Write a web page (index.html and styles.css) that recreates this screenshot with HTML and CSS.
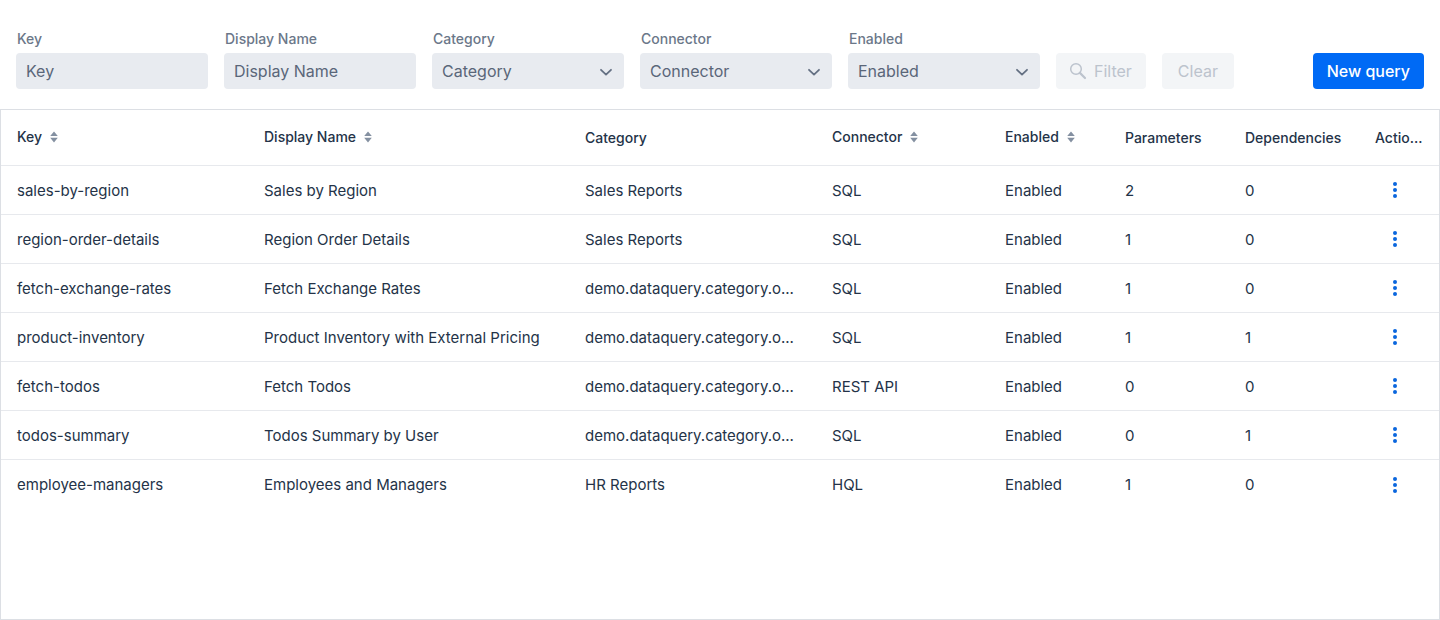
FILE: index.html
```html
<!DOCTYPE html>
<html lang="en">
<head>
    <meta charset="UTF-8">
    <meta name="viewport" content="width=device-width, initial-scale=1.0">
    <title>Data Queries</title>
    <link rel="stylesheet" href="styles.css">
</head>
<body>
    <!-- Shared icons -->
    <svg class="sprite" aria-hidden="true">
        <symbol id="chevron" viewBox="0 0 14 14">
            <path d="M2 4.8 L7 9.6 L12 4.8" fill="none" stroke="currentColor" stroke-width="1.8" stroke-linecap="round" stroke-linejoin="round"/>
        </symbol>
        <symbol id="sort" viewBox="0 0 8 12">
            <path d="M4 0.4 L7.8 5 H0.2 Z M4 11.4 L7.8 6.8 H0.2 Z" fill="currentColor"/>
        </symbol>
        <symbol id="dots" viewBox="0 0 16 16">
            <circle cx="8" cy="2" r="2" fill="currentColor"/>
            <circle cx="8" cy="8" r="2" fill="currentColor"/>
            <circle cx="8" cy="14" r="2" fill="currentColor"/>
        </symbol>
    </svg>

    <form class="filter-bar">
        <div class="field">
            <label for="filterKey">Key</label>
            <input type="text" id="filterKey" placeholder="Key">
        </div>
        <div class="field">
            <label for="filterName">Display Name</label>
            <input type="text" id="filterName" placeholder="Display Name">
        </div>
        <div class="field">
            <label for="filterCategory">Category</label>
            <div class="select-wrap">
                <select id="filterCategory"><option>Category</option></select>
                <svg class="chevron"><use href="#chevron"/></svg>
            </div>
        </div>
        <div class="field">
            <label for="filterConnector">Connector</label>
            <div class="select-wrap">
                <select id="filterConnector"><option>Connector</option></select>
                <svg class="chevron"><use href="#chevron"/></svg>
            </div>
        </div>
        <div class="field">
            <label for="filterEnabled">Enabled</label>
            <div class="select-wrap">
                <select id="filterEnabled"><option>Enabled</option></select>
                <svg class="chevron"><use href="#chevron"/></svg>
            </div>
        </div>
        <button type="button" class="btn btn-filter" disabled>
            <svg class="search-icon" viewBox="0 0 18 18" aria-hidden="true">
                <circle cx="7" cy="7" r="5.3" fill="none" stroke="currentColor" stroke-width="1.5"/>
                <path d="M10.9 10.9 L16 16" stroke="currentColor" stroke-width="2.2" stroke-linecap="round"/>
            </svg>
            Filter
        </button>
        <button type="button" class="btn" disabled>Clear</button>
        <button type="button" class="btn btn-primary">New query</button>
    </form>

    <main class="grid">
        <table>
            <colgroup>
                <col class="col-key">
                <col>
                <col class="col-category">
                <col class="col-connector">
                <col class="col-enabled">
                <col class="col-parameters">
                <col class="col-dependencies">
                <col class="col-actions">
            </colgroup>
            <thead>
                <tr>
                    <th><button class="sorter">Key <svg><use href="#sort"/></svg></button></th>
                    <th><button class="sorter">Display Name <svg><use href="#sort"/></svg></button></th>
                    <th>Category</th>
                    <th><button class="sorter">Connector <svg><use href="#sort"/></svg></button></th>
                    <th><button class="sorter">Enabled <svg><use href="#sort"/></svg></button></th>
                    <th>Parameters</th>
                    <th>Dependencies</th>
                    <th>Actions</th>
                </tr>
            </thead>
            <tbody>
                <tr>
                    <td>sales-by-region</td>
                    <td>Sales by Region</td>
                    <td>Sales Reports</td>
                    <td>SQL</td>
                    <td>Enabled</td>
                    <td>2</td>
                    <td>0</td>
                    <td><button class="menu-btn" aria-label="Actions"><svg><use href="#dots"/></svg></button></td>
                </tr>
                <tr>
                    <td>region-order-details</td>
                    <td>Region Order Details</td>
                    <td>Sales Reports</td>
                    <td>SQL</td>
                    <td>Enabled</td>
                    <td>1</td>
                    <td>0</td>
                    <td><button class="menu-btn" aria-label="Actions"><svg><use href="#dots"/></svg></button></td>
                </tr>
                <tr>
                    <td>fetch-exchange-rates</td>
                    <td>Fetch Exchange Rates</td>
                    <td>demo.dataquery.category.o...</td>
                    <td>SQL</td>
                    <td>Enabled</td>
                    <td>1</td>
                    <td>0</td>
                    <td><button class="menu-btn" aria-label="Actions"><svg><use href="#dots"/></svg></button></td>
                </tr>
                <tr>
                    <td>product-inventory</td>
                    <td>Product Inventory with External Pricing</td>
                    <td>demo.dataquery.category.o...</td>
                    <td>SQL</td>
                    <td>Enabled</td>
                    <td>1</td>
                    <td>1</td>
                    <td><button class="menu-btn" aria-label="Actions"><svg><use href="#dots"/></svg></button></td>
                </tr>
                <tr>
                    <td>fetch-todos</td>
                    <td>Fetch Todos</td>
                    <td>demo.dataquery.category.o...</td>
                    <td>REST API</td>
                    <td>Enabled</td>
                    <td>0</td>
                    <td>0</td>
                    <td><button class="menu-btn" aria-label="Actions"><svg><use href="#dots"/></svg></button></td>
                </tr>
                <tr>
                    <td>todos-summary</td>
                    <td>Todos Summary by User</td>
                    <td>demo.dataquery.category.o...</td>
                    <td>SQL</td>
                    <td>Enabled</td>
                    <td>0</td>
                    <td>1</td>
                    <td><button class="menu-btn" aria-label="Actions"><svg><use href="#dots"/></svg></button></td>
                </tr>
                <tr>
                    <td>employee-managers</td>
                    <td>Employees and Managers</td>
                    <td>HR Reports</td>
                    <td>HQL</td>
                    <td>Enabled</td>
                    <td>1</td>
                    <td>0</td>
                    <td><button class="menu-btn" aria-label="Actions"><svg><use href="#dots"/></svg></button></td>
                </tr>
            </tbody>
        </table>
    </main>
</body>
</html>
```
FILE: styles.css
```css
* {
    box-sizing: border-box;
}

body {
    margin: 0;
    min-height: 100vh;
    display: flex;
    flex-direction: column;
    font-family: Inter, Roboto, sans-serif;
    font-size: 15px;
    color: #243348;
    background: #ffffff;
}

button, input, select {
    font: inherit;
}

.sprite {
    display: none;
}

/* Filter bar */
.filter-bar {
    display: flex;
    align-items: flex-end;
    gap: 16px;
    padding: 28px 16px 20px;
}

.field {
    width: 192px;
}

.field label {
    display: block;
    padding-left: 1px;
    margin-bottom: 3px;
    font-size: 14px;
    line-height: 22px;
    font-weight: 500;
    color: #6b7789;
}

.field input,
.field select {
    display: block;
    width: 100%;
    height: 36px;
    padding: 0 10px;
    border: none;
    border-radius: 4px;
    background: #e8ebf0;
    color: #5a6679;
    font-size: 16px;
    appearance: none;
}

.field input::placeholder {
    color: #5a6679;
    opacity: 1;
}

.select-wrap {
    position: relative;
}

.chevron {
    position: absolute;
    top: 12px;
    right: 11px;
    width: 14px;
    height: 14px;
    color: #647083;
    pointer-events: none;
}

.btn {
    height: 36px;
    padding: 0 16px;
    border: none;
    border-radius: 4px;
    background: #f3f5f7;
    color: #bcc3cd;
    font-size: 16px;
    white-space: nowrap;
}

.btn-filter {
    display: flex;
    align-items: center;
    gap: 7px;
    padding: 0 14px 0 13px;
}

.search-icon {
    width: 18px;
    height: 18px;
}

.btn-primary {
    margin-left: auto;
    padding: 0 14px;
    background: #006af5;
    color: #ffffff;
    font-weight: 500;
}

/* Query grid */
.grid {
    flex: 1;
    border: 1px solid #dcdfe4;
}

table {
    width: 100%;
    table-layout: fixed;
    border-collapse: separate;
    border-spacing: 0;
}

.col-key,
.col-category {
    width: 247px;
}

.col-connector {
    width: 173px;
}

.col-enabled,
.col-parameters {
    width: 120px;
}

.col-dependencies {
    width: 130px;
}

.col-actions {
    width: 80px;
}

th, td {
    padding: 0 16px;
    text-align: left;
    vertical-align: middle;
    white-space: nowrap;
    overflow: hidden;
    text-overflow: ellipsis;
    border-bottom: 1px solid #e7e9ed;
}

th {
    height: 56px;
    font-size: 14px;
    font-weight: 500;
}

td {
    height: 49px;
}

tbody tr:last-child td {
    border-bottom: none;
}

.sorter {
    display: flex;
    align-items: center;
    gap: 8px;
    padding: 0 0 2px;
    border: none;
    background: none;
    color: inherit;
}

.sorter svg {
    width: 8px;
    height: 12px;
    color: #8490a1;
}

.menu-btn {
    display: flex;
    align-items: center;
    justify-content: center;
    width: 40px;
    height: 36px;
    padding: 0;
    border: none;
    background: none;
    color: #0a66dd;
}

.menu-btn svg {
    width: 16px;
    height: 16px;
}
```
